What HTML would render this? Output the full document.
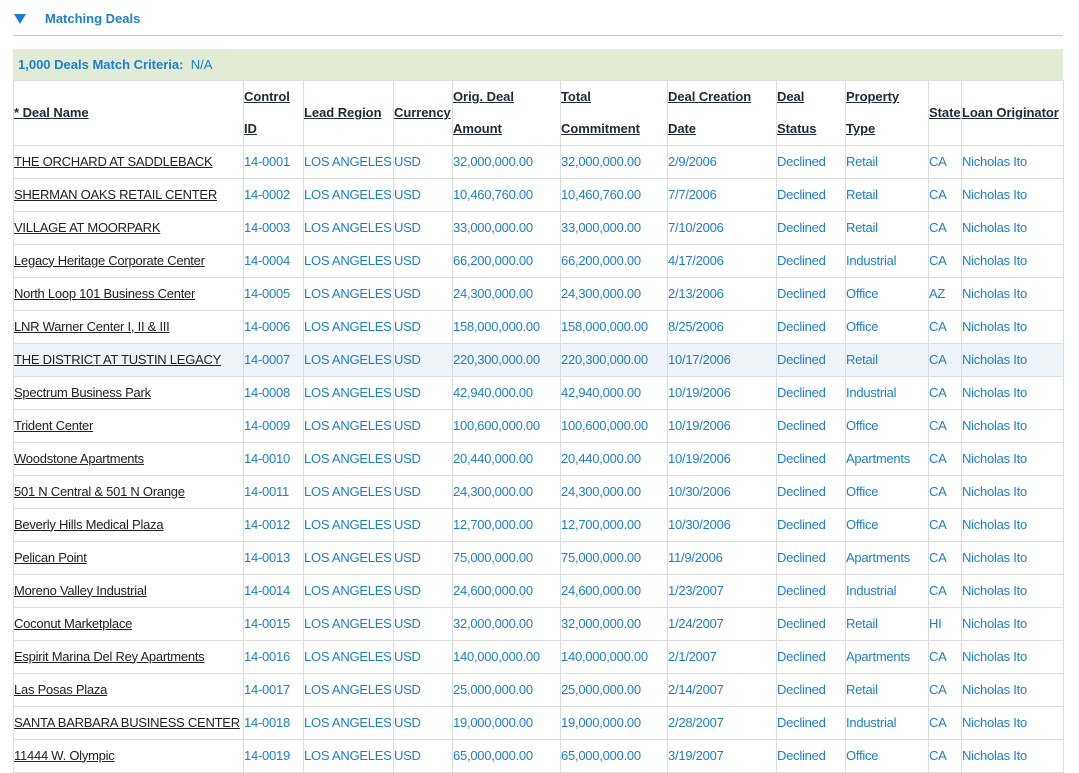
<!DOCTYPE html>
<html><head><meta charset="utf-8"><style>
body{margin:0;background:#fff;font-family:"Liberation Sans",Arial,sans-serif;width:1079px;height:769px;overflow:hidden;position:relative}
.hdr{position:absolute;left:14px;top:11px;font-size:13px;font-weight:bold;color:#1a7fd4}
.hdr .tri{position:absolute;left:0;top:3px;width:0;height:0;border-left:6px solid transparent;border-right:6px solid transparent;border-top:10px solid #1a7fd4}
.hdr span.t{position:absolute;left:31px;top:0;white-space:nowrap}
.line{position:absolute;left:13px;top:35px;width:1050px;height:1px;background:#c8c8c8}
.green{position:absolute;left:13px;top:49px;width:1050px;height:31px;background:#e2ebd3;font-size:13px;color:#1a7fd4;line-height:31px}
.green b{margin-left:5px}
table{position:absolute;left:13px;top:80px;border-collapse:collapse;table-layout:fixed;width:1050px;font-size:13px;letter-spacing:-0.25px}
td,th{border:1px solid #dcdcdc;padding:0;color:#1a7fd4;white-space:nowrap;overflow:hidden;text-align:left;font-weight:normal}
td{height:30px;padding-bottom:2px}
th{height:63px;color:#1f2a33;font-weight:bold;text-decoration:underline;line-height:32px;vertical-align:middle;letter-spacing:-0.05px}
td:first-child{color:#222;text-decoration:underline}
tr.hl td{background:#eef3f7}
</style></head><body>
<div class="hdr"><div class="tri"></div><span class="t">Matching Deals</span></div>
<div class="line"></div>
<div class="green"><b>1,000 Deals Match Criteria:</b>&nbsp; N/A</div>
<table>
<colgroup><col style="width:230px"><col style="width:60px"><col style="width:90px"><col style="width:59px"><col style="width:108px"><col style="width:107px"><col style="width:109px"><col style="width:69px"><col style="width:83px"><col style="width:33px"><col style="width:102px"></colgroup>
<tr><th>* Deal Name</th><th>Control<br>ID</th><th>Lead Region</th><th>Currency</th><th>Orig. Deal<br>Amount</th><th>Total<br>Commitment</th><th>Deal Creation<br>Date</th><th>Deal<br>Status</th><th>Property<br>Type</th><th>State</th><th>Loan Originator</th></tr>
<tr><td>THE ORCHARD AT SADDLEBACK</td><td>14-0001</td><td>LOS ANGELES</td><td>USD</td><td>32,000,000.00</td><td>32,000,000.00</td><td>2/9/2006</td><td>Declined</td><td>Retail</td><td>CA</td><td>Nicholas Ito</td></tr>
<tr><td>SHERMAN OAKS RETAIL CENTER</td><td>14-0002</td><td>LOS ANGELES</td><td>USD</td><td>10,460,760.00</td><td>10,460,760.00</td><td>7/7/2006</td><td>Declined</td><td>Retail</td><td>CA</td><td>Nicholas Ito</td></tr>
<tr><td>VILLAGE AT MOORPARK</td><td>14-0003</td><td>LOS ANGELES</td><td>USD</td><td>33,000,000.00</td><td>33,000,000.00</td><td>7/10/2006</td><td>Declined</td><td>Retail</td><td>CA</td><td>Nicholas Ito</td></tr>
<tr><td>Legacy Heritage Corporate Center</td><td>14-0004</td><td>LOS ANGELES</td><td>USD</td><td>66,200,000.00</td><td>66,200,000.00</td><td>4/17/2006</td><td>Declined</td><td>Industrial</td><td>CA</td><td>Nicholas Ito</td></tr>
<tr><td>North Loop 101 Business Center</td><td>14-0005</td><td>LOS ANGELES</td><td>USD</td><td>24,300,000.00</td><td>24,300,000.00</td><td>2/13/2006</td><td>Declined</td><td>Office</td><td>AZ</td><td>Nicholas Ito</td></tr>
<tr><td>LNR Warner Center I, II &amp; III</td><td>14-0006</td><td>LOS ANGELES</td><td>USD</td><td>158,000,000.00</td><td>158,000,000.00</td><td>8/25/2006</td><td>Declined</td><td>Office</td><td>CA</td><td>Nicholas Ito</td></tr>
<tr class="hl"><td>THE DISTRICT AT TUSTIN LEGACY</td><td>14-0007</td><td>LOS ANGELES</td><td>USD</td><td>220,300,000.00</td><td>220,300,000.00</td><td>10/17/2006</td><td>Declined</td><td>Retail</td><td>CA</td><td>Nicholas Ito</td></tr>
<tr><td>Spectrum Business Park</td><td>14-0008</td><td>LOS ANGELES</td><td>USD</td><td>42,940,000.00</td><td>42,940,000.00</td><td>10/19/2006</td><td>Declined</td><td>Industrial</td><td>CA</td><td>Nicholas Ito</td></tr>
<tr><td>Trident Center</td><td>14-0009</td><td>LOS ANGELES</td><td>USD</td><td>100,600,000.00</td><td>100,600,000.00</td><td>10/19/2006</td><td>Declined</td><td>Office</td><td>CA</td><td>Nicholas Ito</td></tr>
<tr><td>Woodstone Apartments</td><td>14-0010</td><td>LOS ANGELES</td><td>USD</td><td>20,440,000.00</td><td>20,440,000.00</td><td>10/19/2006</td><td>Declined</td><td>Apartments</td><td>CA</td><td>Nicholas Ito</td></tr>
<tr><td>501 N Central &amp; 501 N Orange</td><td>14-0011</td><td>LOS ANGELES</td><td>USD</td><td>24,300,000.00</td><td>24,300,000.00</td><td>10/30/2006</td><td>Declined</td><td>Office</td><td>CA</td><td>Nicholas Ito</td></tr>
<tr><td>Beverly Hills Medical Plaza</td><td>14-0012</td><td>LOS ANGELES</td><td>USD</td><td>12,700,000.00</td><td>12,700,000.00</td><td>10/30/2006</td><td>Declined</td><td>Office</td><td>CA</td><td>Nicholas Ito</td></tr>
<tr><td>Pelican Point</td><td>14-0013</td><td>LOS ANGELES</td><td>USD</td><td>75,000,000.00</td><td>75,000,000.00</td><td>11/9/2006</td><td>Declined</td><td>Apartments</td><td>CA</td><td>Nicholas Ito</td></tr>
<tr><td>Moreno Valley Industrial</td><td>14-0014</td><td>LOS ANGELES</td><td>USD</td><td>24,600,000.00</td><td>24,600,000.00</td><td>1/23/2007</td><td>Declined</td><td>Industrial</td><td>CA</td><td>Nicholas Ito</td></tr>
<tr><td>Coconut Marketplace</td><td>14-0015</td><td>LOS ANGELES</td><td>USD</td><td>32,000,000.00</td><td>32,000,000.00</td><td>1/24/2007</td><td>Declined</td><td>Retail</td><td>HI</td><td>Nicholas Ito</td></tr>
<tr><td>Espirit Marina Del Rey Apartments</td><td>14-0016</td><td>LOS ANGELES</td><td>USD</td><td>140,000,000.00</td><td>140,000,000.00</td><td>2/1/2007</td><td>Declined</td><td>Apartments</td><td>CA</td><td>Nicholas Ito</td></tr>
<tr><td>Las Posas Plaza</td><td>14-0017</td><td>LOS ANGELES</td><td>USD</td><td>25,000,000.00</td><td>25,000,000.00</td><td>2/14/2007</td><td>Declined</td><td>Retail</td><td>CA</td><td>Nicholas Ito</td></tr>
<tr><td>SANTA BARBARA BUSINESS CENTER</td><td>14-0018</td><td>LOS ANGELES</td><td>USD</td><td>19,000,000.00</td><td>19,000,000.00</td><td>2/28/2007</td><td>Declined</td><td>Industrial</td><td>CA</td><td>Nicholas Ito</td></tr>
<tr><td>11444 W. Olympic</td><td>14-0019</td><td>LOS ANGELES</td><td>USD</td><td>65,000,000.00</td><td>65,000,000.00</td><td>3/19/2007</td><td>Declined</td><td>Office</td><td>CA</td><td>Nicholas Ito</td></tr>
</table>
</body></html>
